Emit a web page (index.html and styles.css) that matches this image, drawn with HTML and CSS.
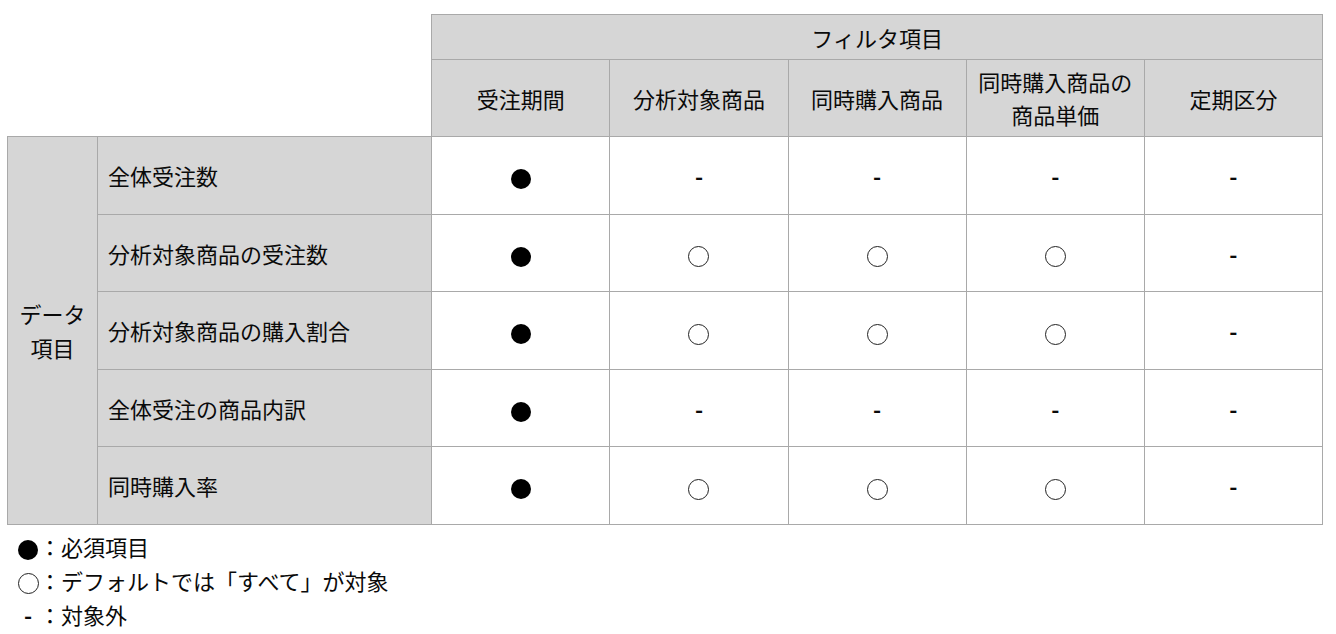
FILE: index.html
```html
<!DOCTYPE html>
<html lang="ja">
<head>
<meta charset="utf-8">
<link rel="stylesheet" href="styles.css">
</head>
<body>
<table class="grid">
  <colgroup>
    <col class="c-cat"><col class="c-item">
    <col class="c-f"><col class="c-f"><col class="c-f"><col class="c-f"><col class="c-f">
  </colgroup>
  <thead>
    <tr class="h1">
      <th class="blank" colspan="2" rowspan="2"></th>
      <th class="hd" colspan="5">フィルタ項目</th>
    </tr>
    <tr class="h2">
      <th class="hd">受注期間</th>
      <th class="hd">分析対象商品</th>
      <th class="hd">同時購入商品</th>
      <th class="hd">同時購入商品の<br>商品単価</th>
      <th class="hd">定期区分</th>
    </tr>
  </thead>
  <tbody>
    <tr>
      <th class="cat" rowspan="5">データ<br>項目</th>
      <th class="item">全体受注数</th>
      <td><span class="dot"></span></td><td class="na">-</td><td class="na">-</td><td class="na">-</td><td class="na">-</td>
    </tr>
    <tr>
      <th class="item">分析対象商品の受注数</th>
      <td><span class="dot"></span></td><td><span class="ring"></span></td><td><span class="ring"></span></td><td><span class="ring"></span></td><td class="na">-</td>
    </tr>
    <tr>
      <th class="item">分析対象商品の購入割合</th>
      <td><span class="dot"></span></td><td><span class="ring"></span></td><td><span class="ring"></span></td><td><span class="ring"></span></td><td class="na">-</td>
    </tr>
    <tr>
      <th class="item">全体受注の商品内訳</th>
      <td><span class="dot"></span></td><td class="na">-</td><td class="na">-</td><td class="na">-</td><td class="na">-</td>
    </tr>
    <tr>
      <th class="item">同時購入率</th>
      <td><span class="dot"></span></td><td><span class="ring"></span></td><td><span class="ring"></span></td><td><span class="ring"></span></td><td class="na">-</td>
    </tr>
  </tbody>
</table>
<ul class="legend">
  <li><span class="lg-mark"><span class="dot"></span></span>：必須項目</li>
  <li><span class="lg-mark"><span class="ring"></span></span>：デフォルトでは「すべて」が対象</li>
  <li><span class="lg-mark lg-dash">-</span>：対象外</li>
</ul>
</body>
</html>
```
FILE: styles.css
```css
html, body {
  margin: 0;
  padding: 0;
  background: #fff;
}
body {
  padding: 14px 0 0 7px;
  font-family: "Noto Sans CJK JP", "Noto Sans", sans-serif;
  color: #0a0a0a;
  font-size: 22px;
}
.grid {
  border-collapse: collapse;
  table-layout: fixed;
  width: 1316px;
}
.c-cat { width: 90px; }
.c-item { width: 334px; }
.c-f { width: 178px; }
.grid th, .grid td {
  border: 1px solid #a9a9a9;
  padding: 0;
  font-weight: 400;
  text-align: center;
  vertical-align: middle;
  line-height: 30px;
}
.grid .blank {
  border: none;
  border-bottom: 1px solid #a9a9a9;
  border-right: 1px solid #a9a9a9;
  background: #fff;
}
.hd, .cat, .item { background: #d6d6d6; }
.grid .hd { line-height: 33px; }
.h1 { height: 45px; }
.h2 { height: 77px; }
.grid tbody tr { height: 77.5px; }
.grid .item {
  text-align: left;
  padding-left: 10px;
}
.grid .cat { line-height: 34px; }
.grid .na { font-weight: 700; }
.dot, .ring {
  display: inline-block;
  width: 20px;
  height: 20px;
  border-radius: 50%;
  vertical-align: middle;
  box-sizing: border-box;
}
.dot { background: #000; }
.ring { border: 1.5px solid #222; width: 21px; height: 21px; }
.legend {
  list-style: none;
  margin: 4px 0 0 10px;
  padding: 0;
  line-height: 34px;
}
.lg-mark { display: inline-block; width: 22px; text-align: center; }
.lg-dash { font-weight: 700; }
```
